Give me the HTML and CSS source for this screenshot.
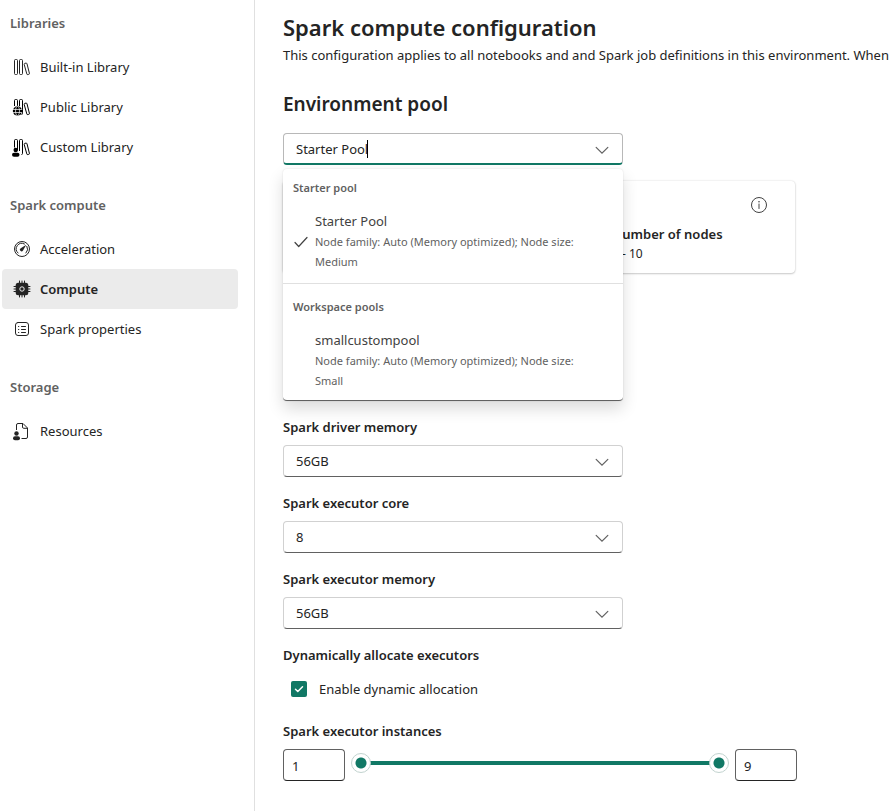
FILE: index.html
```html
<!DOCTYPE html>
<html lang="en">
<head>
<meta charset="utf-8">
<meta name="viewport" content="width=device-width, initial-scale=1">
<title>Spark compute configuration</title>
<link rel="stylesheet" href="styles.css">
</head>
<body>
<div class="app">
  <nav class="sidebar">
    <section class="nav-group">
      <h2 class="nav-title">Libraries</h2>
      <a class="nav-item" href="#">
        <svg class="icon" viewBox="0 0 20 20" fill="none" stroke="currentColor"><rect x="2.5" y="2.5" width="3" height="15" rx="1"/><rect x="7.500" y="2.500" width="3" height="15" rx="1"/><path d="M12.700 6.400l1.300-.3a.9.9 0 0 1 1 .7l2.400 9.500a.9.9 0 0 1-.7 1.100l-.8.2a.9.9 0 0 1-1.100-.7L12.200 7.500a.9.9 0 0 1 .5-1.100z"/></svg>
        Built-in Library</a>
      <a class="nav-item" href="#">
        <svg class="icon" viewBox="0 0 20 20" fill="none" stroke="#000"><path d="M2.500 9v-5.500a1 1 0 0 1 1-1h1a1 1 0 0 1 1 1v5.500M7.500 9v-5.500a1 1 0 0 1 1-1h1a1 1 0 0 1 1 1v13a1 1 0 0 1-1 1"/><path d="M12.700 6.400l1.300-.3a.9.9 0 0 1 1 .7l2.400 9.500a.9.9 0 0 1-.7 1.100l-.8.2a.9.9 0 0 1-1.100-.7L12.200 7.500a.9.9 0 0 1 .5-1.100z"/><circle cx="5.500" cy="14" r="4.700" fill="#000" stroke="none"/><path d="M.8 12.500h9.400M.8 15.500h9.400" stroke="#fff" stroke-width=".7"/><ellipse cx="5.500" cy="14" rx="2" ry="4.700" stroke="#fff" stroke-width=".7"/></svg>
        Public Library</a>
      <a class="nav-item" href="#">
        <svg class="icon" viewBox="0 0 20 20" fill="none" stroke="#000"><path d="M2.500 10.500v-7a1 1 0 0 1 1-1h1a1 1 0 0 1 1 1v10M7.500 14v-10.500a1 1 0 0 1 1-1h1a1 1 0 0 1 1 1v13a1 1 0 0 1-1 1"/><path d="M12.700 6.400l1.300-.3a.9.9 0 0 1 1 .7l2.400 9.500a.9.9 0 0 1-.7 1.100l-.8.2a.9.9 0 0 1-1.100-.7L12.200 7.500a.9.9 0 0 1 .5-1.100z"/><g fill="#000" stroke="none"><circle cx="3.700" cy="13" r="2.200"/><rect x="0" y="15.700" width="7.500" height="4" rx="2"/></g></svg>
        Custom Library</a>
    </section>
    <section class="nav-group">
      <h2 class="nav-title">Spark compute</h2>
      <a class="nav-item" href="#">
        <svg class="icon" viewBox="0 0 20 20" fill="none" stroke="currentColor"><circle cx="10" cy="10" r="7.500"/><path d="M6 14a5.600 5.600 0 0 1 6.500-9M14.900 7.300a5.600 5.600 0 0 1-.9 6.700" stroke-linecap="round"/><path d="M14.300 5.700l-5.600 3.500a1.700 1.700 0 1 0 2.300 2.400z" fill="currentColor" stroke="none"/></svg>
        Acceleration</a>
      <a class="nav-item nav-item-active" href="#" aria-current="page">
        <svg class="icon" viewBox="0 0 20 20" fill="none" stroke="currentColor"><path d="M7.500 2v3M10 2v3M12.500 2v3M7.500 15v3M10 15v3M12.500 15v3M2 7.500h3M2 10h3M2 12.500h3M15 7.500h3M15 10h3M15 12.500h3" stroke-linecap="round"/><rect x="3.700" y="3.700" width="12.600" height="12.600" rx="2.500" fill="currentColor" stroke="none"/><circle cx="10" cy="10" r="2.200" stroke="#ebebeb"/></svg>
        Compute</a>
      <a class="nav-item" href="#">
        <svg class="icon" viewBox="0 0 20 20" fill="none" stroke="currentColor" stroke-linecap="round"><rect x="3.500" y="3.500" width="13" height="13" rx="2.500"/><path d="M9.500 7.500h4M9.500 10.500h4M9.500 13.500h4M6.500 7.500h.3M6.500 10.500h.3M6.500 13.500h.3"/></svg>
        Spark properties</a>
    </section>
    <section class="nav-group">
      <h2 class="nav-title">Storage</h2>
      <a class="nav-item" href="#">
        <svg class="icon" viewBox="0 0 20 20" fill="none" stroke="currentColor"><path d="M4.500 9V4a1.500 1.500 0 0 1 1.500-1.500h5l4.500 4.500v9a1.500 1.500 0 0 1-1.500 1.500H9.500M10.500 2.500V6a1.300 1.300 0 0 0 1.300 1.300h3.700"/><g fill="currentColor" stroke="none"><circle cx="4.500" cy="12.500" r="2.200"/><rect x="1" y="15.300" width="7" height="4" rx="2"/></g></svg>
        Resources</a>
    </section>
  </nav>

  <main class="content">
    <h1 class="page-title">Spark compute configuration</h1>
    <p class="page-intro">This configuration applies to all notebooks and and Spark job definitions in this environment. When</p>

    <h2 class="section-title" id="pool-title">Environment pool</h2>
    <div class="select-box">
      <input class="control control-open" type="text" role="combobox" aria-expanded="true" aria-controls="pool-list" aria-labelledby="pool-title" value="Starter Pool">
      <span class="caret"></span>
      <svg class="chevron" viewBox="0 0 20 20" fill="none" stroke="currentColor" stroke-width="1.300" stroke-linecap="round"><path d="M3.500 7l6.500 6.500 6.500-6.500"/></svg>
      <div class="menu" id="pool-list" role="listbox" aria-labelledby="pool-title">
        <div class="menu-group" role="group" aria-labelledby="g1">
          <div class="menu-title" id="g1">Starter pool</div>
          <div class="option" role="option" aria-selected="true">
            <svg class="check" viewBox="0 0 16 16" fill="none" stroke="currentColor" stroke-width="1.200" stroke-linecap="round" stroke-linejoin="round"><path d="M2 8.500l3.700 4L14 3.500"/></svg>
            <div class="option-text">
              <div class="option-name">Starter Pool</div>
              <div class="option-detail">Node family: Auto (Memory optimized); Node size: Medium</div>
            </div>
          </div>
        </div>
        <div class="menu-group" role="group" aria-labelledby="g2">
          <div class="menu-title" id="g2">Workspace pools</div>
          <div class="option" role="option" aria-selected="false">
            <span class="check"></span>
            <div class="option-text">
              <div class="option-name">smallcustompool</div>
              <div class="option-detail">Node family: Auto (Memory optimized); Node size: Small</div>
            </div>
          </div>
        </div>
      </div>
    </div>

    <section class="pool-card">
      <button class="info" type="button" aria-label="Pool details">
        <svg viewBox="0 0 16 16" fill="none" stroke="currentColor"><circle cx="8" cy="8" r="7.500"/><path d="M8 7v4.500" stroke-linecap="round"/><circle cx="8" cy="4.800" r=".8" fill="currentColor" stroke="none"/></svg>
      </button>
      <div class="nodes">
        <div class="nodes-title">Number of nodes</div>
        <div class="nodes-range">1 - 10</div>
      </div>
    </section>

    <form class="fields">
      <div class="field">
        <label class="label" for="driver-memory">Spark driver memory</label>
        <div class="select-box">
          <select class="control" id="driver-memory"><option>56GB</option></select>
          <svg class="chevron" viewBox="0 0 20 20" fill="none" stroke="currentColor" stroke-width="1.300" stroke-linecap="round"><path d="M3.500 7l6.500 6.500 6.500-6.500"/></svg>
        </div>
      </div>
      <div class="field">
        <label class="label" for="executor-core">Spark executor core</label>
        <div class="select-box">
          <select class="control" id="executor-core"><option>8</option></select>
          <svg class="chevron" viewBox="0 0 20 20" fill="none" stroke="currentColor" stroke-width="1.300" stroke-linecap="round"><path d="M3.500 7l6.500 6.500 6.500-6.500"/></svg>
        </div>
      </div>
      <div class="field">
        <label class="label" for="executor-memory">Spark executor memory</label>
        <div class="select-box">
          <select class="control" id="executor-memory"><option>56GB</option></select>
          <svg class="chevron" viewBox="0 0 20 20" fill="none" stroke="currentColor" stroke-width="1.300" stroke-linecap="round"><path d="M3.500 7l6.500 6.500 6.500-6.500"/></svg>
        </div>
      </div>
      <div class="field">
        <div class="label">Dynamically allocate executors</div>
        <div class="check-row">
          <span class="tick-box">
            <input class="tick" type="checkbox" id="dynamic" checked>
            <svg class="tick-mark" viewBox="0 0 12 12" fill="none" stroke="currentColor" stroke-width="1.500" stroke-linecap="round" stroke-linejoin="round"><path d="M2.500 6.300l2.300 2.200 4.700-4.700"/></svg>
          </span>
          <label for="dynamic">Enable dynamic allocation</label>
        </div>
      </div>
      <div class="field">
        <div class="label" id="instances">Spark executor instances</div>
        <div class="range-row">
          <input class="number" type="text" inputmode="numeric" aria-label="Minimum instances" value="1">
          <div class="slider" role="group" aria-labelledby="instances">
            <input class="range" type="range" min="1" max="9" value="1" aria-label="Minimum">
            <input class="range" type="range" min="1" max="9" value="9" aria-label="Maximum">
          </div>
          <input class="number" type="text" inputmode="numeric" aria-label="Maximum instances" value="9">
        </div>
      </div>
    </form>
  </main>
</div>
</body>
</html>
```
FILE: styles.css
```css
:root {
  --accent: #117865;
  --text: #242424;
  --muted: #616161;
  --line: #d1d1d1;
}

* { box-sizing: border-box; }

body {
  margin: 0;
  background: #fff;
  color: var(--text);
  font-family: "Noto Sans", "Open Sans", sans-serif;
  font-size: 13px;
  line-height: 20px;
}

h1, h2, p { margin: 0; }

input, select, button {
  margin: 0;
  color: inherit;
  font: inherit;
}

.app {
  display: flex;
  min-height: 100vh;
}

/* Sidebar */
.sidebar {
  display: flex;
  flex: 0 0 255px;
  flex-direction: column;
  gap: 28px;
  padding: 13px 16px 13px 2px;
  border-right: 1px solid #e0e0e0;
}

.nav-title {
  margin: 0 8px 14px;
  color: var(--muted);
  font-size: 13px;
  font-weight: 600;
}

.nav-item {
  display: flex;
  align-items: center;
  gap: 8px;
  height: 40px;
  padding: 0 10px;
  border-radius: 4px;
  color: var(--text);
  text-decoration: none;
}

.nav-item-active {
  background: #ebebeb;
  font-weight: 600;
}

.icon {
  width: 20px;
  height: 20px;
}

/* Content */
.content {
  flex: 1;
  min-width: 0;
  overflow: hidden;
  padding: 11px 0 30px 28px;
}

.page-title {
  font-size: 22px;
  font-weight: 600;
  line-height: 32px;
}

.page-intro {
  margin-top: 2px;
  white-space: nowrap;
}

.section-title {
  margin: 25px 0 15px;
  font-size: 19px;
  font-weight: 600;
  line-height: 28px;
}

.select-box {
  position: relative;
  max-width: 340px;
}

.control {
  display: block;
  width: 100%;
  height: 32px;
  padding: 0 40px 0 12px;
  border: 1px solid var(--line);
  border-bottom-color: var(--muted);
  border-radius: 4px;
  outline: 0;
  appearance: none;
  background: #fff;
}

.control-open {
  border-color: #b8b8b8;
  border-bottom: 2px solid var(--accent);
}

.caret {
  position: absolute;
  top: 7px;
  left: 84px;
  width: 1px;
  height: 18px;
  background: #000;
}

.chevron {
  position: absolute;
  top: 8px;
  right: 12px;
  width: 18px;
  height: 18px;
  color: var(--muted);
  pointer-events: none;
}

.menu {
  position: absolute;
  z-index: 2;
  top: 36px;
  right: 0;
  left: 0;
  border-bottom: 1px solid var(--muted);
  border-radius: 4px;
  background: #fff;
  box-shadow: 0 0 2px rgba(0, 0, 0, .12), 0 8px 16px rgba(0, 0, 0, .14);
}

.menu-group { padding: 9px 10px 11px; }
.menu-group + .menu-group { border-top: 1px solid #e0e0e0; padding: 13px 10px 9px; }

.menu-title {
  margin-bottom: 13px;
  color: var(--muted);
  font-size: 11px;
  font-weight: 600;
}

.option {
  display: flex;
  align-items: center;
  gap: 6px;
  color: #424242;
}

.option-text { padding-right: 16px; }

.check {
  flex: 0 0 16px;
  height: 16px;
}

.option-detail {
  margin-top: 1px;
  color: var(--muted);
  font-size: 11px;
}

/* Pool summary */
.pool-card {
  display: flex;
  flex-direction: column;
  align-items: flex-end;
  gap: 12px;
  max-width: 512px;
  margin-top: 16px;
  padding: 16px 28px 10px;
  border-radius: 4px;
  box-shadow: 0 0 2px rgba(0, 0, 0, .16), 0 1px 2px rgba(0, 0, 0, .18);
}

.info {
  width: 16px;
  height: 16px;
  padding: 0;
  border: 0;
  background: none;
  color: #424242;
}

.info svg {
  display: block;
  width: 16px;
  height: 16px;
}

.nodes {
  width: 155px;
  line-height: 19px;
}

.nodes-title { font-weight: 600; }
.nodes-range { font-size: 12px; }

/* Settings */
.fields {
  display: flex;
  flex-direction: column;
  gap: 16px;
  max-width: 514px;
  margin-top: 144px;
}

.label {
  display: block;
  margin-bottom: 8px;
  font-weight: 600;
}

.check-row {
  display: flex;
  align-items: center;
  gap: 12px;
  height: 32px;
  padding-left: 8px;
}

.tick-box {
  position: relative;
  width: 16px;
  height: 16px;
}

.tick {
  display: block;
  width: 16px;
  height: 16px;
  border-radius: 2px;
  appearance: none;
  background: var(--accent);
}

.tick-mark {
  position: absolute;
  inset: 2px;
  width: 12px;
  height: 12px;
  color: #fff;
  pointer-events: none;
}

.range-row {
  display: flex;
  align-items: flex-start;
  gap: 6px;
}

.number {
  width: 62px;
  height: 32px;
  padding: 2px 8px 0;
  border: 1px solid var(--muted);
  border-bottom-color: #242424;
  border-radius: 4px;
  background: #fff;
}

.slider {
  display: grid;
  flex: 1;
  align-items: center;
  height: 28px;
  background: linear-gradient(var(--accent), var(--accent)) center / calc(100% - 20px) 4px no-repeat;
}

.range {
  grid-area: 1 / 1;
  width: 100%;
  height: 20px;
  margin: 0;
  appearance: none;
  background: none;
  pointer-events: none;
}

.range::-webkit-slider-thumb {
  width: 20px;
  height: 20px;
  border: 1px solid #c2d3cf;
  border-radius: 50%;
  appearance: none;
  background: radial-gradient(circle, var(--accent) 5px, #fff 6px);
  pointer-events: auto;
}
```
